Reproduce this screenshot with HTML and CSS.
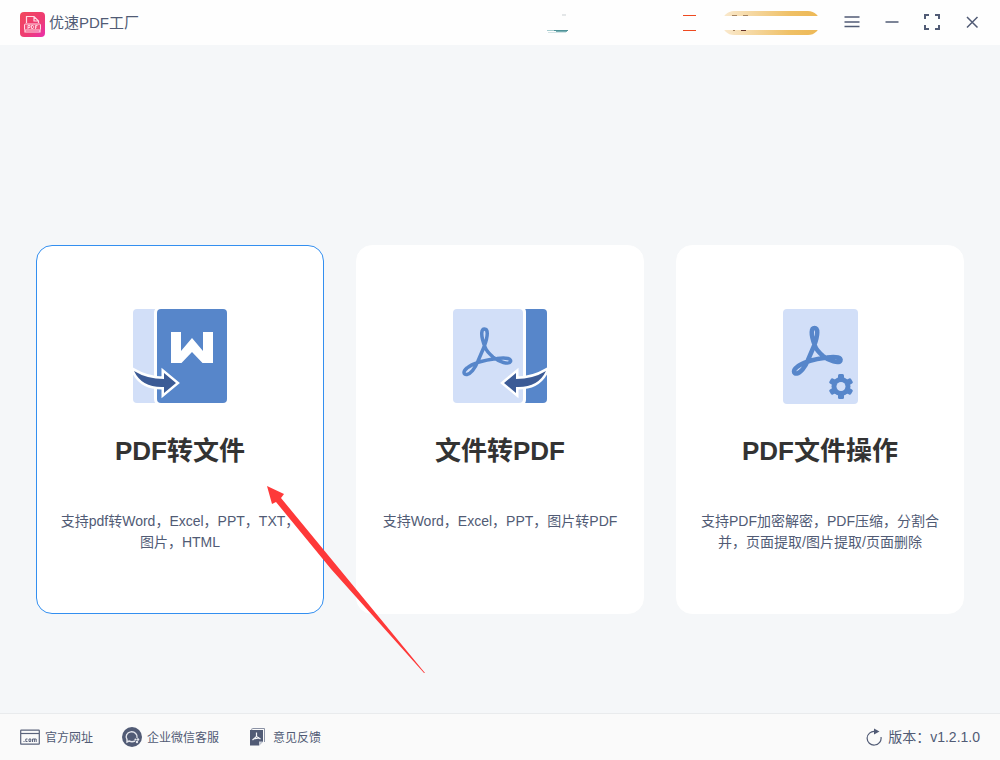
FILE: index.html
```html
<!DOCTYPE html>
<html lang="zh-CN">
<head>
<meta charset="utf-8">
<meta name="viewport" content="width=device-width, initial-scale=1">
<title>优速PDF工厂</title>
<link rel="stylesheet" href="styles.css">
</head>
<body>
<svg class="defs" aria-hidden="true">
  <symbol id="acrobat" viewBox="0 0 72 95">
    <path d="M32 38C27 25 28.500 20 31.500 20C35 20 35.500 26 31 38L25 52C22 60 17 65 14 65.500C10 66 10 62 14 59C20 54 32 51 44 49.500C54 48 58.500 50 57.500 52.500C56 56 46 53 40 48C36 44.500 33 41 32 38z" fill="none" stroke="#5786ca" stroke-linejoin="round"/>
  </symbol>
</svg>
<header class="titlebar">
  <svg class="logo" viewBox="0 0 25 25" aria-hidden="true">
    <defs><linearGradient id="pink" x1="0" y1="0" x2="1" y2="1"><stop offset="0" stop-color="#f2495c"/><stop offset=".6" stop-color="#ee3b74"/><stop offset="1" stop-color="#e92fae"/></linearGradient></defs>
    <rect width="25" height="25" rx="4" fill="url(#pink)"/>
    <path d="M6.500 11V4.500H14L18.500 9v2M14 4.500V9h4.500M5 17.500V20h15v-2.500" fill="none" stroke="#ffdbe5" stroke-width="1.200"/>
    <rect x="4.500" y="12" width="16" height="6" rx="1" fill="#f0527c" stroke="#ffdbe5"/>
    <path d="M8 17v-3.500h2v2H8M11.500 13.500v3h1.500l.5-1v-1l-.5-1zM15.500 17v-3.500h2M15.500 15h1.500" fill="none" stroke="#ffdbe5" stroke-width=".9"/>
  </svg>
  <h1 class="app-name">优速PDF工厂</h1>
  <svg class="account" viewBox="0 0 274 24" aria-hidden="true">
    <defs><linearGradient id="gold"><stop offset="0" stop-color="#faead0"/><stop offset=".7" stop-color="#efc065"/><stop offset="1" stop-color="#edb856"/></linearGradient></defs>
    <path d="M16 4h4" stroke="#c9cfd2"/>
    <path d="M1 19.500h7" stroke="#a8cdd0"/><path d="M8 19.500h14" stroke="#4f9298"/>
    <path d="M10 20.500h11" stroke="#79afb3"/><path d="M2 21.500h18" stroke="#d3e4e6"/>
    <path d="M137 4.500h13M137 19.500h13" stroke="#ee4a20"/>
    <rect x="176" y="0" width="98" height="24" rx="12" fill="url(#gold)"/>
    <path d="M186 4.500h5M197 4.500h5" stroke="#a5835f"/>
    <path d="M187 19.500h2" stroke="#a5835f"/><path d="M195 19.500h5" stroke="#64332c"/>
    <path d="M174 5h100v14H174z" fill="#fff"/>
  </svg>
  <nav class="controls" aria-label="窗口">
    <button class="control" type="button" aria-label="菜单"><svg viewBox="0 0 18 18"><path d="M1.500 4h15M1.500 9h15M1.500 13.500h15"/></svg></button>
    <button class="control" type="button" aria-label="最小化"><svg viewBox="0 0 18 18"><path d="M2.500 9h13"/></svg></button>
    <button class="control" type="button" aria-label="全屏"><svg viewBox="0 0 18 18"><path class="thick" d="M2 6V2H6M12 2h4V6M16 12v4H12M6 16H2V12"/></svg></button>
    <button class="control" type="button" aria-label="关闭"><svg viewBox="0 0 18 18"><path d="M4 4l10.500 10.500M14.500 4L4 14.500"/></svg></button>
  </nav>
</header>
<main class="content">
  <div class="cards">
    <div class="card-slot">
      <button class="card selected" type="button">
        <svg class="card-icon" viewBox="0 0 94 95" aria-hidden="true">
          <path d="M4 0H25V94H4Q0 94 0 90V4Q0 0 4 0z" fill="#d2dff8"/>
          <rect x="21" y="-3" width="76" height="100" rx="7" fill="#fff"/>
          <rect x="24" width="70" height="94" rx="4" fill="#5786ca"/>
          <path d="M38 23h10v19l11-13 11 13V23h10v31H69.500L59 43 48.500 54H38z" fill="#fff"/>
          <path class="arrow-halo" d="M1 62Q14 70 31 70V64L43 74 31 84V78Q9 79 1 62z"/>
          <path d="M1 62Q14 70 31 70V64L43 74 31 84V78Q9 79 1 62z" fill="#3c5b96"/>
        </svg>
        <strong class="card-title">PDF转文件</strong>
        <span class="card-text">支持pdf转Word，Excel，PPT，TXT，图片，HTML</span>
      </button>
      <svg class="pointer" viewBox="0 0 160 188" aria-hidden="true"><path d="M0 0L17 8 14 12 70 80 158 187 157 187 64 83 9 16 5 18z" fill="#fe3939"/></svg>
    </div>
    <div class="card-slot">
      <button class="card" type="button">
        <svg class="card-icon" viewBox="0 0 94 95" aria-hidden="true">
          <rect x="50" width="44" height="94" rx="4" fill="#5786ca"/>
          <rect x="40" y="-3" width="33" height="100" rx="6" fill="#fff"/>
          <rect width="70" height="94" rx="4" fill="#d2dff8"/>
          <use href="#acrobat" width="72" height="95" stroke-width="3.500"/>
          <path class="arrow-halo" d="M93 62Q80 70 63 70V64L51 74 63 84V78Q85 79 93 62z"/>
          <path d="M93 62Q80 70 63 70V64L51 74 63 84V78Q85 79 93 62z" fill="#3c5b96"/>
        </svg>
        <strong class="card-title">文件转PDF</strong>
        <span class="card-text">支持Word，Excel，PPT，图片转PDF</span>
      </button>
    </div>
    <div class="card-slot">
      <button class="card" type="button">
        <svg class="card-icon narrow" viewBox="0 0 75 95" aria-hidden="true">
          <rect width="75" height="95" rx="4" fill="#d2dff8"/>
          <use href="#acrobat" y="-1" width="72" height="95" stroke-width="4.500"/>
          <g fill="#5786ca">
            <circle cx="58" cy="77.500" r="9.500"/>
            <rect id="tooth" x="55" y="65" width="6" height="25" rx="1.500"/>
            <use href="#tooth" transform="rotate(60 58 77.500)"/>
            <use href="#tooth" transform="rotate(120 58 77.500)"/>
          </g>
          <circle cx="58" cy="77.500" r="4.500" fill="#d2dff8"/>
        </svg>
        <strong class="card-title">PDF文件操作</strong>
        <span class="card-text">支持PDF加密解密，PDF压缩，分割合并，页面提取/图片提取/页面删除</span>
      </button>
    </div>
  </div>
</main>
<footer class="statusbar">
  <a class="foot-link" href="#">
    <svg class="foot-icon" viewBox="0 0 20 20" aria-hidden="true"><g fill="none" stroke="#5a637b"><rect x=".7" y="3.200" width="18.600" height="14" rx=".5" stroke-width="1.200"/><path d="M1 6.500h18" stroke-width="1.200"/><path d="M3.500 14.500h1M7.500 12H5.800v2.500h1.700M9 12h1.800v2.500H9zM12.500 15v-3h3.700v3M14.400 12v3"/></g></svg>
    <span class="foot-label">官方网址</span></a>
  <a class="foot-link" href="#">
    <svg class="foot-icon" viewBox="0 0 20 20" aria-hidden="true"><circle cx="10" cy="10" r="10" fill="#515b75"/><path d="M13 14Q10 15.500 7 14L5 15V12.500A5.500 5 0 1 1 15 11" fill="none" stroke="#e4e6ec" stroke-width="1.400"/><circle cx="13.500" cy="12.500" r="1.100" fill="#e4e6ec"/><circle cx="16" cy="12.500" r="1.200" fill="#e4e6ec"/><circle cx="15" cy="15" r="1.200" fill="#e4e6ec"/></svg>
    <span class="foot-label">企业微信客服</span></a>
  <a class="foot-link" href="#">
    <svg class="foot-icon" viewBox="0 0 20 20" aria-hidden="true"><path d="M3 2.500L5 1.500H16.500V15" fill="none" stroke="#8b92a5"/><path d="M2 3h13v11.500l-4 4H2z" fill="#515b75"/><path d="M11 18.500V14.500h4z" fill="#cbd0da"/><path d="M8.500 5.500v4L4.500 13M8.500 9.500l4 2.500M5.500 12l5.500-1.200" fill="none" stroke="#f4f5f8" stroke-width="1.200"/></svg>
    <span class="foot-label">意见反馈</span></a>
  <button class="version" type="button">
    <svg class="refresh" viewBox="0 0 16 18" aria-hidden="true"><path d="M9 3.500A7 6.800 0 1 0 15 9" fill="none" stroke="#515b75" stroke-width="1.200"/><path d="M8 .5l5.500 3L8 6.500z" fill="#515b75"/></svg>
    <span class="foot-label">版本：v1.2.1.0</span></button>
</footer>
</body>
</html>
```
FILE: styles.css
```css
* { box-sizing: border-box; }

body {
  display: flex;
  flex-direction: column;
  min-height: 100vh;
  margin: 0;
  background: #f5f7f9;
  color: #515b75;
  font-family: "Liberation Sans", "Noto Sans CJK SC", sans-serif;
}

button {
  border: 0;
  background: none;
  color: inherit;
  font: inherit;
  cursor: pointer;
}

.defs { display: none; }

.titlebar {
  display: flex;
  align-items: flex-start;
  height: 45px;
  padding: 0 8px 0 20px;
  background: #fefefe;
}

.logo { width: 25px; height: 25px; margin-top: 12px; }

.app-name {
  margin: 0 0 0 4px;
  font-size: 15px;
  font-weight: 400;
  line-height: 46px;
}

.account {
  width: 274px;
  height: 24px;
  margin: 11px 12px 0 auto;
}

.controls { display: flex; }

.control {
  display: grid;
  place-items: center;
  width: 40px;
  height: 43px;
  padding: 0;
}

.control svg {
  width: 18px;
  height: 18px;
  fill: none;
  stroke: #515b75;
  stroke-width: 1.5;
}

.control .thick { stroke-width: 2; }

.content {
  display: flex;
  flex: 1;
  flex-direction: column;
  justify-content: center;
  padding: 101px 36px 0;
}

.cards {
  display: grid;
  grid-template-columns: repeat(3, 1fr);
  gap: 32px;
}

.card-slot { display: flex; position: relative; }

.card {
  display: flex;
  flex-direction: column;
  align-items: center;
  width: 100%;
  min-height: 369px;
  padding: 63px 23px 60px;
  border: 1px solid #fff;
  border-radius: 16px;
  background: #fff;
}

.card.selected { border-color: #338ff0; }

.card-icon { width: 94px; height: 95px; }
.card-icon.narrow { width: 75px; }

.arrow-halo {
  fill: #fff;
  stroke: #fff;
  stroke-width: 5;
}

.card-title {
  margin: 29px 0 42px;
  color: #333;
  font-size: 26px;
  line-height: 36px;
}

.card-text {
  font-size: 14px;
  line-height: 21px;
}

/* Red pointer that starts between the cards and aims at the first one */
.pointer {
  position: absolute;
  top: 241px;
  left: 231px;
  z-index: 1;
  width: 160px;
  height: 188px;
  pointer-events: none;
}

.statusbar {
  display: flex;
  align-items: center;
  gap: 29px;
  height: 47px;
  padding: 0 20px;
  border-top: 1px solid #e9ebed;
  background: #fafafa;
}

.foot-link {
  display: flex;
  align-items: center;
  gap: 5px;
  color: inherit;
  font-size: 12px;
  text-decoration: none;
}

.foot-label { padding-bottom: 2px; }

.foot-icon { width: 20px; height: 20px; }

.version {
  display: flex;
  align-items: center;
  gap: 6px;
  margin-left: auto;
  padding: 0;
  font-size: 14px;
}

.refresh { width: 16px; height: 18px; }
```
